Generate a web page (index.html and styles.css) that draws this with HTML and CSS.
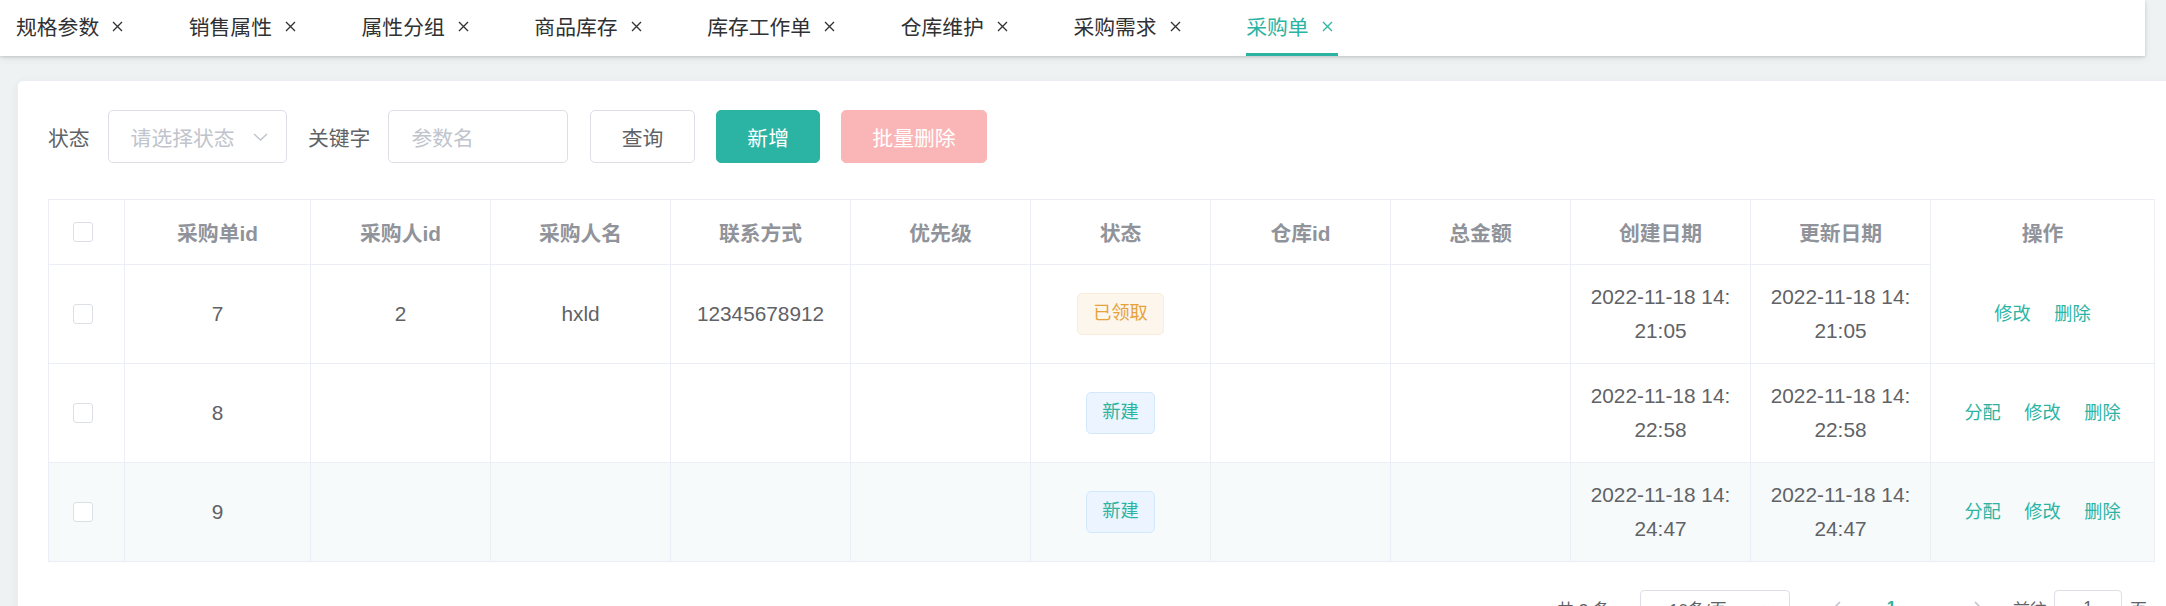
FILE: index.html
```html
<!DOCTYPE html>
<html lang="zh-CN">
<head>
<meta charset="utf-8">
<title>采购单</title>
<link rel="stylesheet" href="styles.css">
</head>
<body>
<div class="tabs">
  <div class="tab first"><span>规格参数</span><svg class="tab-close" viewBox="0 0 11 11"><path d="M1 1L10 10M10 1L1 10"/></svg></div>
  <div class="tab"><span>销售属性</span><svg class="tab-close" viewBox="0 0 11 11"><path d="M1 1L10 10M10 1L1 10"/></svg></div>
  <div class="tab"><span>属性分组</span><svg class="tab-close" viewBox="0 0 11 11"><path d="M1 1L10 10M10 1L1 10"/></svg></div>
  <div class="tab"><span>商品库存</span><svg class="tab-close" viewBox="0 0 11 11"><path d="M1 1L10 10M10 1L1 10"/></svg></div>
  <div class="tab"><span>库存工作单</span><svg class="tab-close" viewBox="0 0 11 11"><path d="M1 1L10 10M10 1L1 10"/></svg></div>
  <div class="tab"><span>仓库维护</span><svg class="tab-close" viewBox="0 0 11 11"><path d="M1 1L10 10M10 1L1 10"/></svg></div>
  <div class="tab"><span>采购需求</span><svg class="tab-close" viewBox="0 0 11 11"><path d="M1 1L10 10M10 1L1 10"/></svg></div>
  <div class="tab active"><span>采购单</span><svg class="tab-close" viewBox="0 0 11 11"><path d="M1 1L10 10M10 1L1 10"/></svg></div>
</div>

<div class="main">
  <div class="card">
    <div class="toolbar">
      <span class="label">状态</span>
      <div class="field select">
        <span class="placeholder">请选择状态</span>
        <svg class="chev" viewBox="0 0 15 8"><path d="M1 1L7.5 7L14 1"/></svg>
      </div>
      <span class="label">关键字</span>
      <div class="field input"><span class="placeholder">参数名</span></div>
      <button class="btn">查询</button>
      <button class="btn primary">新增</button>
      <button class="btn danger-disabled">批量删除</button>
    </div>

    <table class="grid">
      <colgroup>
        <col class="w-sel"><col class="w-id"><col class="w-col"><col class="w-col"><col class="w-col"><col class="w-col"><col class="w-col"><col class="w-col"><col class="w-col"><col class="w-col"><col class="w-col"><col class="w-ops">
      </colgroup>
      <thead>
        <tr>
          <th class="sel"><span class="checkbox"></span></th>
          <th>采购单id</th>
          <th>采购人id</th>
          <th>采购人名</th>
          <th>联系方式</th>
          <th>优先级</th>
          <th>状态</th>
          <th>仓库id</th>
          <th>总金额</th>
          <th>创建日期</th>
          <th>更新日期</th>
          <th class="ops">操作</th>
        </tr>
      </thead>
      <tbody>
        <tr>
          <td class="sel"><span class="checkbox"></span></td>
          <td>7</td>
          <td>2</td>
          <td>hxld</td>
          <td>12345678912</td>
          <td></td>
          <td><span class="tag warning">已领取</span></td>
          <td></td>
          <td></td>
          <td>2022-11-18 14:21:05</td>
          <td>2022-11-18 14:21:05</td>
          <td class="ops"><div class="links"><span class="link">修改</span><span class="link">删除</span></div></td>
        </tr>
        <tr>
          <td class="sel"><span class="checkbox"></span></td>
          <td>8</td>
          <td></td>
          <td></td>
          <td></td>
          <td></td>
          <td><span class="tag info">新建</span></td>
          <td></td>
          <td></td>
          <td>2022-11-18 14:22:58</td>
          <td>2022-11-18 14:22:58</td>
          <td class="ops"><div class="links"><span class="link">分配</span><span class="link">修改</span><span class="link">删除</span></div></td>
        </tr>
        <tr class="hover">
          <td class="sel"><span class="checkbox"></span></td>
          <td>9</td>
          <td></td>
          <td></td>
          <td></td>
          <td></td>
          <td><span class="tag info">新建</span></td>
          <td></td>
          <td></td>
          <td>2022-11-18 14:24:47</td>
          <td>2022-11-18 14:24:47</td>
          <td class="ops"><div class="links"><span class="link">分配</span><span class="link">修改</span><span class="link">删除</span></div></td>
        </tr>
      </tbody>
    </table>

    <div class="pager">
      <span class="total">共 3 条</span>
      <div class="sizes"><span>10条/页</span><svg class="chev small" viewBox="0 0 15 8"><path d="M1 1L7.5 7L14 1"/></svg></div>
      <span class="pg-btn"><svg class="arrow" viewBox="0 0 8 14"><path d="M7 1L1 7L7 13"/></svg></span>
      <span class="pg-btn current">1</span>
      <span class="pg-btn"><svg class="arrow" viewBox="0 0 8 14"><path d="M1 1L7 7L1 13"/></svg></span>
      <span class="jump">前往</span>
      <div class="jump-input">1</div>
      <span class="jump-unit">页</span>
    </div>
  </div>
</div>
</body>
</html>
```

FILE: styles.css
```css
html, body {
  margin: 0;
  padding: 0;
}

body {
  width: 2166px;
  height: 606px;
  overflow: hidden;
  background: #eff2f3;
  font-family: "Liberation Sans", "Noto Sans CJK SC", sans-serif;
}

/* ---------- tabs ---------- */
.tabs {
  position: relative;
  z-index: 1;
  display: flex;
  width: 2145px;
  height: 56px;
  background: #fff;
  box-shadow: 0 1px 3px rgba(0, 0, 0, 0.16), 0 3px 8px rgba(0, 0, 0, 0.06);
}

.tab {
  position: relative;
  display: flex;
  align-items: center;
  height: 56px;
  box-sizing: border-box;
  padding: 0 30px 4px 30px;
  font-size: 20.8px;
  color: #303133;
  white-space: nowrap;
}

.tab.first {
  padding-left: 16px;
}

.tab-close {
  width: 11px;
  height: 11px;
  margin: 0 5.6px 0 13px;
  fill: none;
  stroke: #303133;
  stroke-width: 1.3;
}

.tab.active {
  color: #2bb3a3;
}

.tab.active .tab-close {
  stroke: #2bb3a3;
}

.tab.active::after {
  content: "";
  position: absolute;
  left: 30px;
  right: 30px;
  bottom: 0;
  height: 3px;
  background: #2bb3a3;
}

/* ---------- card ---------- */
.main {
  padding: 24px 0 0 17px;
}

.card {
  width: 2200px;
  height: 580px;
  box-sizing: border-box;
  padding: 29px 0 0 30px;
  background: #fff;
  border: 1px solid #ebeef5;
  border-radius: 6px;
  box-shadow: 0 2px 10px rgba(0, 0, 0, 0.05);
}

/* ---------- toolbar ---------- */
.toolbar {
  display: flex;
  align-items: center;
  height: 53px;
}

.label {
  font-size: 20.8px;
  color: #606266;
  margin-right: 18px;
  white-space: nowrap;
}

.field {
  display: flex;
  align-items: center;
  width: 179.4px;
  height: 53px;
  box-sizing: border-box;
  border: 1px solid #dcdfe6;
  border-radius: 5px;
  padding-left: 22px;
  font-size: 20.8px;
}

.select {
  justify-content: space-between;
  padding-right: 18px;
  margin-right: 21px;
}

.input {
  margin-right: 22.5px;
}

.placeholder {
  color: #c0c4cc;
  white-space: nowrap;
}

.chev {
  width: 15px;
  height: 8px;
  fill: none;
  stroke: #c0c4cc;
  stroke-width: 1.5;
}

.btn {
  height: 53px;
  box-sizing: border-box;
  padding: 0 30.5px;
  margin: 0 21px 0 0;
  border: 1px solid #dcdfe6;
  border-radius: 5px;
  background: #fff;
  color: #606266;
  font-family: inherit;
  font-size: 20.8px;
  white-space: nowrap;
}

.btn.primary {
  background: #2bb3a3;
  border-color: #2bb3a3;
  color: #fff;
  margin-right: 20.4px;
}

.btn.danger-disabled {
  background: #fab6b6;
  border-color: #fab6b6;
  color: #fff;
}

/* ---------- table ---------- */
.grid {
  margin-top: 36px;
  width: 2107px;
  table-layout: fixed;
  border-collapse: separate;
  border-spacing: 0;
  border-top: 1px solid #ebeef5;
  border-left: 1px solid #ebeef5;
}

.w-sel { width: 76px; }
.w-id { width: 186px; }
.w-col { width: 180px; }
.w-ops { width: 224px; }

.grid th,
.grid td {
  box-sizing: border-box;
  padding: 0 16px;
  text-align: center;
  vertical-align: middle;
  border-right: 1px solid #ebeef5;
  border-bottom: 1px solid #ebeef5;
  font-size: 20.8px;
}

.grid th {
  height: 65px;
  color: #909399;
  font-weight: 700;
  white-space: nowrap;
}

.grid th.ops {
  border-bottom-color: transparent;
}

.grid td {
  height: 99px;
  color: #606266;
  line-height: 34px;
  word-break: break-all;
}

.grid .sel {
  padding: 0 0 0 24px;
  text-align: left;
}

.checkbox {
  display: block;
  width: 20px;
  height: 20px;
  box-sizing: border-box;
  border: 1px solid #dcdfe6;
  border-radius: 3px;
  background: #fff;
}

.grid tr.hover td {
  background: #f6fafa;
}

.tag {
  display: inline-block;
  height: 41.6px;
  line-height: 39.6px;
  box-sizing: border-box;
  padding: 0 15px;
  font-size: 18.2px;
  border: 1px solid;
  border-radius: 5px;
  vertical-align: middle;
  white-space: nowrap;
}

.tag.warning {
  background: #fdf6ec;
  border-color: #faecd8;
  color: #e6a23c;
}

.tag.info {
  background: #ecf5ff;
  border-color: #d4e8fc;
  color: #2bb3a3;
}

.links {
  display: flex;
  justify-content: center;
  gap: 23.5px;
}

.link {
  color: #2bb3a3;
  font-size: 18.2px;
  white-space: nowrap;
}

/* ---------- pagination ---------- */
.pager {
  display: flex;
  align-items: center;
  justify-content: flex-end;
  width: 2107px;
  height: 36px;
  box-sizing: border-box;
  padding-right: 8px;
  margin-top: 28px;
  font-size: 17px;
  color: #606266;
}

.total {
  margin-right: 30px;
  white-space: nowrap;
}

.sizes {
  display: flex;
  align-items: center;
  justify-content: space-between;
  width: 150px;
  height: 36px;
  box-sizing: border-box;
  padding: 0 14px 0 28px;
  border: 1px solid #dcdfe6;
  border-radius: 4px;
  margin-right: 27px;
}

.chev.small {
  width: 12px;
  height: 7px;
}

.pg-btn {
  display: flex;
  align-items: center;
  justify-content: center;
  width: 39px;
  height: 36px;
  margin-right: 16px;
  color: #303133;
  font-weight: 700;
}

.pg-btn.current {
  color: #2bb3a3;
}

.pager .pg-btn:nth-of-type(3) {
  margin-right: 47px;
}

.arrow {
  width: 8px;
  height: 14px;
  fill: none;
  stroke: #c0c4cc;
  stroke-width: 1.6;
}

.jump {
  margin-right: 7px;
  white-space: nowrap;
}

.jump-input {
  width: 68px;
  height: 36px;
  box-sizing: border-box;
  border: 1px solid #dcdfe6;
  border-radius: 4px;
  text-align: center;
  line-height: 34px;
  margin-right: 8px;
}

.jump-unit {
  white-space: nowrap;
}
```
